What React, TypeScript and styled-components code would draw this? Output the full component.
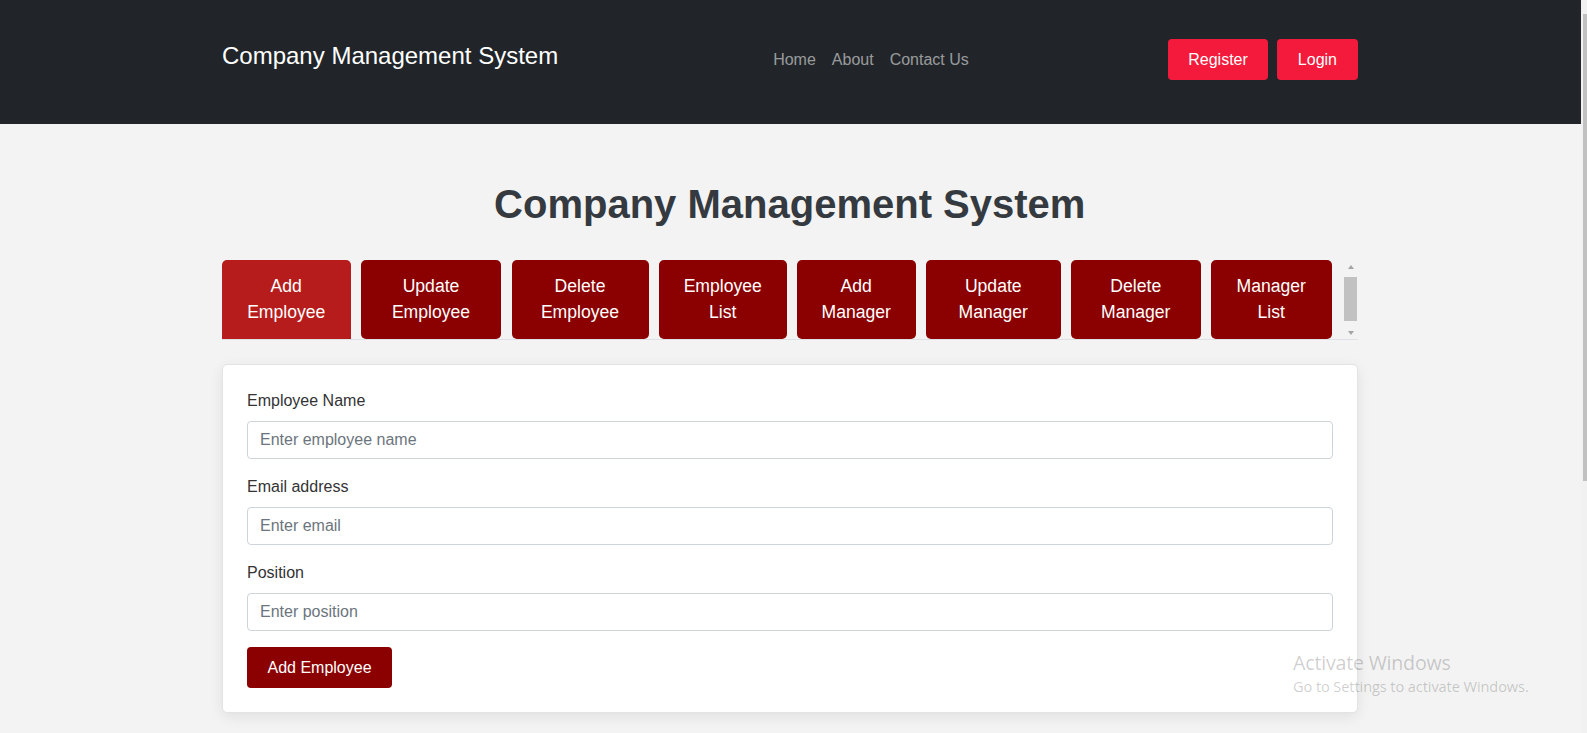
import React from "react";
import styled, { createGlobalStyle } from "styled-components";

const GlobalStyle = createGlobalStyle`
  html, body {
    margin: 0;
    padding: 0;
    background: #f3f3f3;
    font-family: "Liberation Sans", Arial, sans-serif;
    overflow: hidden;
  }
  * { box-sizing: border-box; }
`;

const Page = styled.div`
  position: relative;
  display: flex;
  height: 100vh;
  width: 100%;
  overflow: hidden;
`;

const Main = styled.div`
  flex: 1;
  min-width: 0;
  display: flex;
  flex-direction: column;
`;

const Header = styled.header`
  background: #212529;
  height: 124px;
  flex-shrink: 0;
  padding-bottom: 5px;
  display: flex;
  align-items: center;
`;

const HeaderInner = styled.div`
  width: 1137px;
  padding-right: 1.5px;
  margin: 0 auto;
  display: flex;
  align-items: center;
`;

const Brand = styled.div`
  color: #ffffff;
  font-size: 24px;
  line-height: 36px;
  margin-right: 16px;
  margin-bottom: 7px;
  white-space: nowrap;
`;

const Nav = styled.nav`
  margin: 0 auto;
  display: flex;
`;

const NavLink = styled.a`
  color: rgba(255, 255, 255, 0.55);
  font-size: 16px;
  line-height: 24px;
  padding: 0 8px;
  text-decoration: none;
  cursor: pointer;
`;

const Actions = styled.div`
  display: flex;
  gap: 9px;
`;

const AuthButton = styled.button`
  background: #f41a3b;
  color: #ffffff;
  border: none;
  border-radius: 4px;
  font-family: inherit;
  font-size: 16px;
  line-height: 24px;
  padding: 8.25px 20.5px;
  cursor: pointer;
`;

const Content = styled.main`
  width: 1137px;
  padding-right: 1.5px;
  margin: 0 auto;
  padding-top: 56px;
  padding-bottom: 12px;
`;

const Title = styled.h1`
  margin: 0 0 32px;
  text-align: center;
  font-size: 40px;
  line-height: 1.2;
  font-weight: 700;
  color: #343a40;
`;

const TabsRow = styled.div`
  display: flex;
  align-items: stretch;
  border-bottom: 1px solid #dee2e6;
`;

const TabList = styled.div`
  display: flex;
  gap: 10.5px;
`;

const TabButton = styled.button<{ $w: number; $active?: boolean }>`
  width: ${(p) => p.$w}px;
  background: ${(p) => (p.$active ? "#b71c1c" : "#8b0000")};
  color: #ffffff;
  border: 1px solid transparent;
  border-radius: ${(p) => (p.$active ? "5px 5px 0 0" : "5px")};
  font-family: inherit;
  font-size: 17.6px;
  line-height: 26.4px;
  padding: 12px 14px;
  text-align: center;
  cursor: pointer;
`;

const MiniScroll = styled.div`
  margin-left: auto;
  width: 14px;
  display: flex;
  flex-direction: column;
  align-items: center;
  padding: 5px 0 4px;
`;

const Arrow = styled.div<{ $down?: boolean }>`
  width: 0;
  height: 0;
  border-left: 3.5px solid transparent;
  border-right: 3.5px solid transparent;
  ${(p) =>
    p.$down
      ? "border-top: 4px solid #a3a3a3;"
      : "border-bottom: 4px solid #a3a3a3;"}
`;

const MiniThumb = styled.div`
  width: 13px;
  height: 44px;
  background: #c1c1c1;
  margin: 8px 0 auto;
`;

const Card = styled.section`
  margin-top: 24px;
  background: #ffffff;
  border: 1px solid #e3e3e3;
  border-radius: 5px;
  padding: 24px;
  box-shadow: 0 4px 14px rgba(0, 0, 0, 0.08);
`;

const Field = styled.div`
  margin-bottom: 16px;
`;

const Label = styled.label`
  display: block;
  font-size: 16px;
  line-height: 24px;
  color: #333333;
  margin-bottom: 8px;
`;

const Input = styled.input`
  display: block;
  width: 100%;
  height: 38px;
  padding: 6px 12px;
  font-family: inherit;
  font-size: 16px;
  line-height: 24px;
  color: #212529;
  background: #ffffff;
  border: 1px solid #ced4da;
  border-radius: 4px;
  outline: none;
  &::placeholder {
    color: #6c757d;
  }
`;

const SubmitButton = styled.button`
  background: #8b0000;
  color: #ffffff;
  border: none;
  border-radius: 4px;
  font-family: inherit;
  font-size: 16px;
  line-height: 24px;
  padding: 8.75px 20.5px;
  cursor: pointer;
`;

const PageScrollbar = styled.div`
  width: 6px;
  background: #f1f1f1;
  display: flex;
  flex-direction: column;
`;

const PageThumb = styled.div`
  margin-top: 14px;
  margin-left: 2px;
  height: 467px;
  background: #c1c1c1;
`;

const Watermark = styled.div`
  position: absolute;
  left: 1293px;
  top: 650px;
  color: rgba(0, 0, 0, 0.2);
  font-family: "Open Sans", "Noto Sans", sans-serif;
  pointer-events: none;
`;

const WatermarkTitle = styled.div`
  font-size: 19.6px;
  line-height: 26px;
  letter-spacing: -0.2px;
`;

const WatermarkSub = styled.div`
  font-size: 14.6px;
  line-height: 20px;
  letter-spacing: -0.1px;
`;

const tabs: { label: string; w: number }[] = [
  { label: "Add Employee", w: 128.5 },
  { label: "Update Employee", w: 140 },
  { label: "Delete Employee", w: 137 },
  { label: "Employee List", w: 127.5 },
  { label: "Add Manager", w: 118.5 },
  { label: "Update Manager", w: 134.5 },
  { label: "Delete Manager", w: 129.5 },
  { label: "Manager List", w: 120.5 },
];

export default function App() {
  return (
    <Page>
      <GlobalStyle />
      <Main>
        <Header>
          <HeaderInner>
            <Brand>Company Management System</Brand>
            <Nav>
              <NavLink>Home</NavLink>
              <NavLink>About</NavLink>
              <NavLink>Contact Us</NavLink>
            </Nav>
            <Actions>
              <AuthButton>Register</AuthButton>
              <AuthButton>Login</AuthButton>
            </Actions>
          </HeaderInner>
        </Header>
        <Content>
          <Title>Company Management System</Title>
          <TabsRow>
            <TabList>
              {tabs.map((t, i) => (
                <TabButton key={t.label} $w={t.w} $active={i === 0}>
                  {t.label}
                </TabButton>
              ))}
            </TabList>
            <MiniScroll>
              <Arrow />
              <MiniThumb />
              <Arrow $down />
            </MiniScroll>
          </TabsRow>
          <Card>
            <Field>
              <Label>Employee Name</Label>
              <Input placeholder="Enter employee name" />
            </Field>
            <Field>
              <Label>Email address</Label>
              <Input placeholder="Enter email" />
            </Field>
            <Field>
              <Label>Position</Label>
              <Input placeholder="Enter position" />
            </Field>
            <SubmitButton>Add Employee</SubmitButton>
          </Card>
        </Content>
      </Main>
      <PageScrollbar>
        <PageThumb />
      </PageScrollbar>
      <Watermark>
        <WatermarkTitle>Activate Windows</WatermarkTitle>
        <WatermarkSub>Go to Settings to activate Windows.</WatermarkSub>
      </Watermark>
    </Page>
  );
}
